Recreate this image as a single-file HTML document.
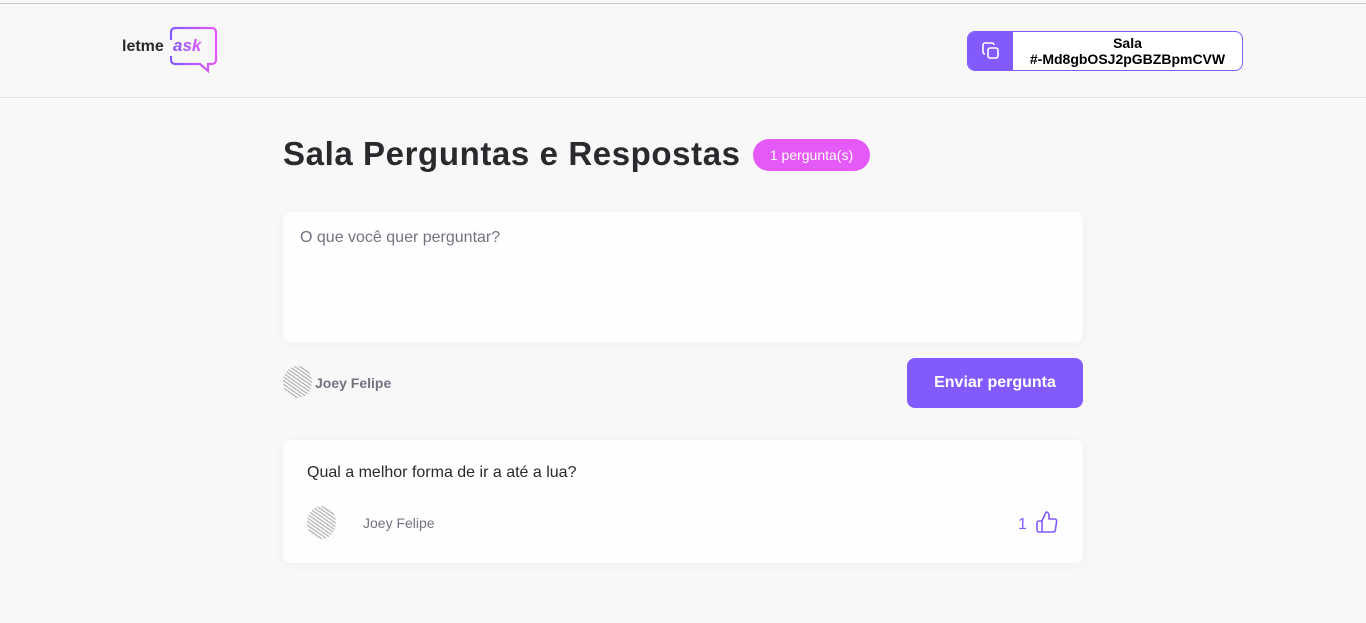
<!DOCTYPE html>
<html><head><meta charset="utf-8"><style>
*{box-sizing:border-box;margin:0;padding:0}
body{width:1366px;height:623px;background:#f8f8f8;font-family:"Liberation Sans",sans-serif;position:relative;overflow:hidden}
.top{position:absolute;top:3px;left:0;width:1366px;height:1px;background:#c8c8c8}
header{position:absolute;top:4px;left:0;width:1366px;height:94px;border-bottom:1px solid #e2e2e2}
.logo{position:absolute;left:122px;top:22px}
.code{position:absolute;left:967px;top:27px;width:276px;height:40px;border:1px solid #835afd;border-radius:8px;background:#fff;overflow:hidden;display:flex}
.code .ic{width:45px;background:#835afd;display:flex;align-items:center;justify-content:center}
.code .t{flex:1;text-align:center;font-size:14px;font-weight:bold;line-height:16px;padding-top:3px;color:#000}
h1{position:absolute;left:283px;top:135px;font-size:33px;font-weight:bold;color:#29292e;letter-spacing:0.6px}
.badge{position:absolute;left:753px;top:139px;width:117px;height:32px;border-radius:16px;background:#e559f9;color:#fff;font-size:14px;text-align:center;line-height:32px}
.ta{position:absolute;left:283px;top:212px;width:800px;height:130px;background:#fefefe;border-radius:8px;box-shadow:0 2px 12px rgba(0,0,0,.04)}
.ta span{position:absolute;left:17px;top:17px;font-size:16px;color:#737380}
.av{position:absolute;border-radius:50%;background:repeating-linear-gradient(35deg,#f4f4f4 0 2px,#999 2px 3px);opacity:.8}
.nm{position:absolute;font-size:14px;color:#737380}
.btn{position:absolute;left:907px;top:358px;width:176px;height:50px;background:#835afd;border-radius:8px;color:#fff;font-size:16px;font-weight:bold;text-align:center;line-height:50px}
.card{position:absolute;left:283px;top:440px;width:800px;height:123px;background:#fefefe;border-radius:8px;box-shadow:0 2px 12px rgba(0,0,0,.04)}
</style></head><body>
<div class="top"></div>
<header>
<div class="logo"><svg width="100" height="50" viewBox="0 0 100 50">
<defs><linearGradient id="g" x1="0" x2="1"><stop offset="0" stop-color="#835afd"/><stop offset="1" stop-color="#e559f9"/></linearGradient></defs>
<path d="M49 14 V6 a4 4 0 0 1 4-4 H90 a4 4 0 0 1 4 4 V34 a4 4 0 0 1-4 4 H86 V45 L78 38 H53 a4 4 0 0 1-4-4 V30" fill="none" stroke="url(#g)" stroke-width="2.2"/>
<text x="0" y="25" font-family="Liberation Sans" font-weight="bold" font-size="16" fill="#29292e">letme</text>
<text x="51" y="25" font-family="Liberation Sans" font-weight="bold" font-style="italic" font-size="17" fill="url(#g)">ask</text>
</svg></div>
<div class="code"><div class="ic"><svg width="20" height="20" viewBox="0 0 20 20" fill="none" stroke="#fff" stroke-width="1.6"><rect x="7" y="7" width="10" height="10" rx="2"/><path d="M4 13 a2 2 0 0 1-2-2 V4 a2 2 0 0 1 2-2 h7 a2 2 0 0 1 2 2"/></svg></div><div class="t">Sala<br>#-Md8gbOSJ2pGBZBpmCVW</div></div>
</header>
<h1>Sala Perguntas e Respostas</h1>
<div class="badge">1 pergunta(s)</div>
<div class="ta"><span>O que você quer perguntar?</span></div>
<div class="av" style="left:283px;top:366px;width:29px;height:32px"></div>
<div class="nm" style="left:315px;top:375px;font-weight:bold">Joey Felipe</div>
<div class="btn">Enviar pergunta</div>
<div class="card">
<div style="position:absolute;left:24px;top:24px;font-size:16px;color:#29292e">Qual a melhor forma de ir a até a lua?</div>
<div class="av" style="left:24px;top:66px;width:29px;height:33px"></div>
<div class="nm" style="left:80px;top:75px">Joey Felipe</div>
<div style="position:absolute;left:735px;top:76px;font-size:16px;color:#835afd">1</div>
<svg style="position:absolute;left:752px;top:70px" width="24" height="24" viewBox="0 0 24 24" fill="none" stroke="#835afd" stroke-width="1.6" stroke-linejoin="round"><path d="M7 22H4a2 2 0 0 1-2-2v-7a2 2 0 0 1 2-2h3M7 11l4-9a3 3 0 0 1 3 3v4h5.7a2 2 0 0 1 2 2.3l-1.4 9a2 2 0 0 1-2 1.7H7z"/></svg>
</div>
</body></html>
